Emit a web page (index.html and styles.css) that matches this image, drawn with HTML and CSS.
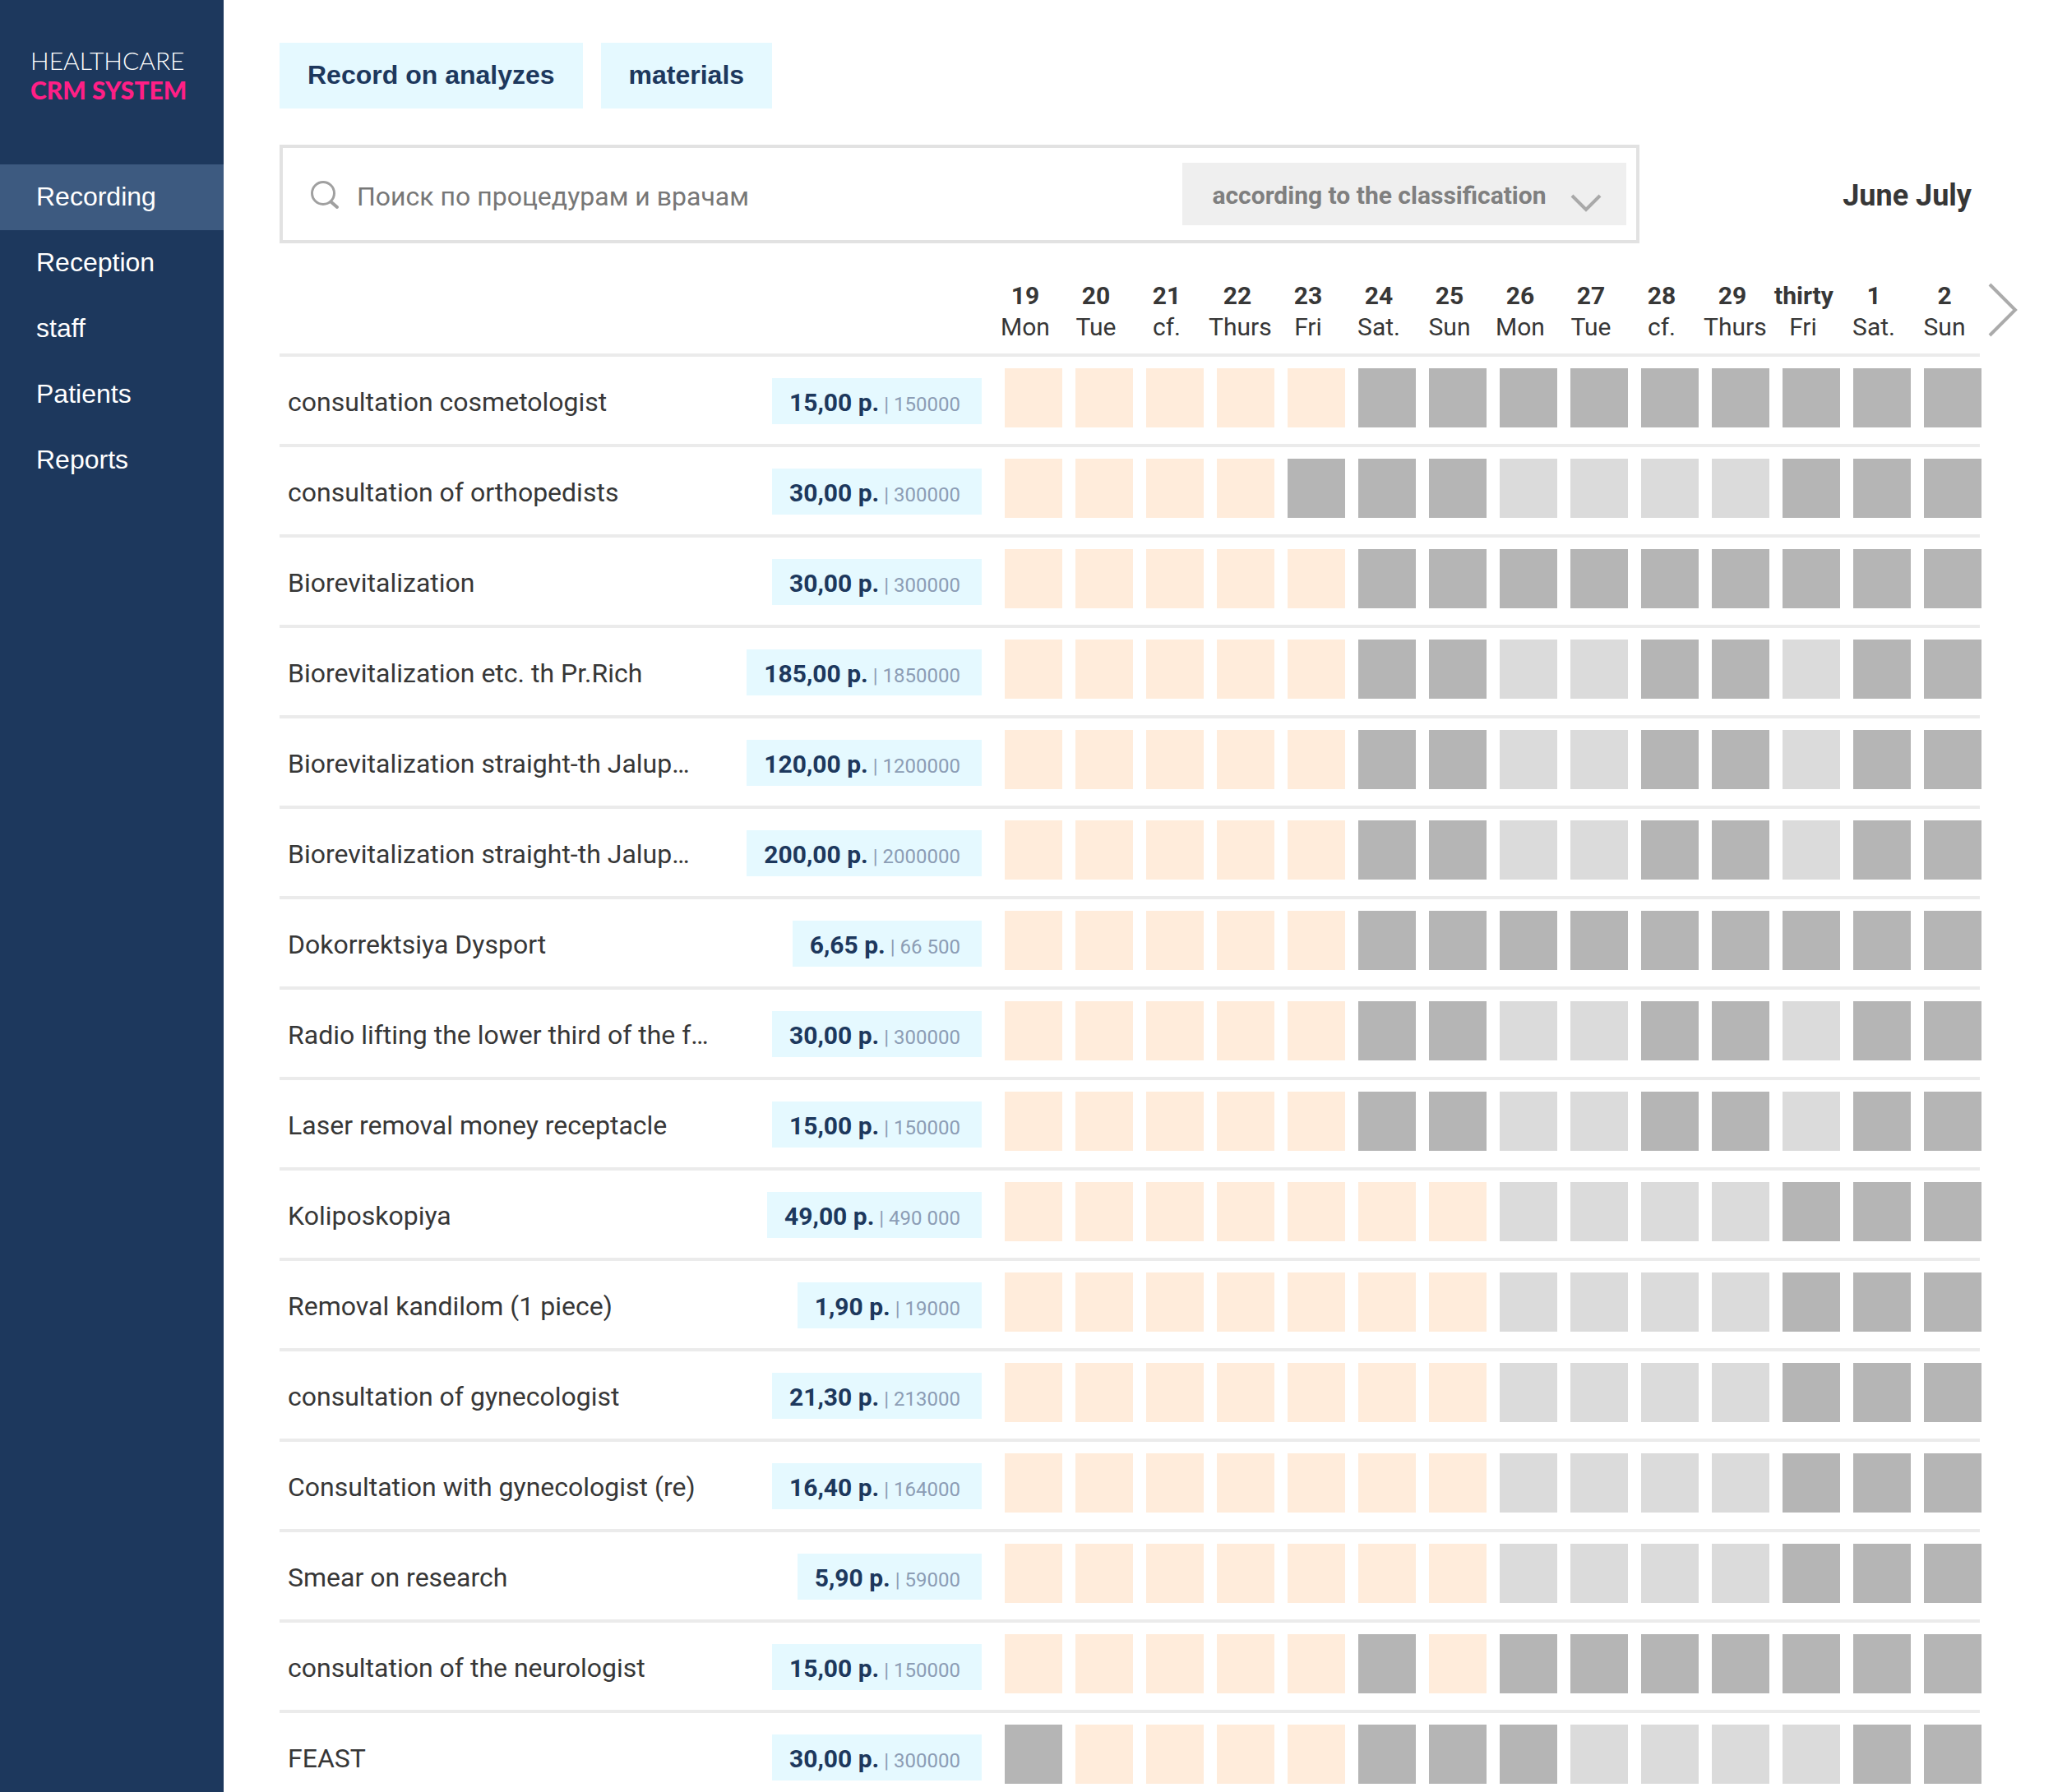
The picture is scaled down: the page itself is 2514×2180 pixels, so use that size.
FILE: index.html
```html
<!DOCTYPE html>
<html lang="en">
<head>
<meta charset="utf-8">
<meta name="viewport" content="width=device-width, initial-scale=1">
<title>Healthcare CRM System</title>
<link rel="stylesheet" href="styles.css">
</head>
<body>
<div class="app">
  <aside class="sidebar">
    <a class="logo" href="#"><span class="logo-top">HEALTHCARE</span><span class="logo-bottom">CRM SYSTEM</span></a>
    <nav class="nav">
      <a class="nav-link active" href="#">Recording</a>
      <a class="nav-link" href="#">Reception</a>
      <a class="nav-link" href="#">staff</a>
      <a class="nav-link" href="#">Patients</a>
      <a class="nav-link" href="#">Reports</a>
    </nav>
  </aside>
  <main class="main">
    <div class="actions">
      <button class="action" type="button">Record on analyzes</button>
      <button class="action" type="button">materials</button>
    </div>
    <div class="toolbar">
      <form class="search">
        <svg class="search-icon" viewBox="0 0 36 36" aria-hidden="true"><circle cx="15" cy="15" r="13.5"/><path class="handle" d="M24.500 25.500l7.500 6.500"/></svg>
        <input class="search-input" type="search" placeholder="Поиск по процедурам и врачам" aria-label="Поиск по процедурам и врачам">
        <div class="sort">
          <select class="sort-select" aria-label="Sort order"><option>according to the classification</option></select>
          <svg class="sort-icon" viewBox="0 0 38 22" aria-hidden="true"><path d="M2 2l17 17L36 2"/></svg>
        </div>
      </form>
      <h1 class="period">June July</h1>
    </div>
    <div class="schedule">
      <table class="table">
        <colgroup><col class="col-name"><col class="col-price"><col class="col-day" span="14"></colgroup>
        <thead>
          <tr>
            <td colspan="2"></td>
            <th scope="col">19<span>Mon</span></th>
            <th scope="col">20<span>Tue</span></th>
            <th scope="col">21<span>cf.</span></th>
            <th scope="col">22<span>Thurs</span></th>
            <th scope="col">23<span>Fri</span></th>
            <th scope="col">24<span>Sat.</span></th>
            <th scope="col">25<span>Sun</span></th>
            <th scope="col">26<span>Mon</span></th>
            <th scope="col">27<span>Tue</span></th>
            <th scope="col">28<span>cf.</span></th>
            <th scope="col">29<span>Thurs</span></th>
            <th scope="col">thirty<span>Fri</span></th>
            <th scope="col">1<span>Sat.</span></th>
            <th scope="col">2<span>Sun</span></th>
          </tr>
        </thead>
        <tbody>
          <tr><th scope="row"><div class="name">consultation cosmetologist</div></th><td class="price"><span class="badge"><b>15,00 p.</b> | 150000</span></td>
            <td class="open"><td class="open"><td class="open"><td class="open"><td class="open"><td class="full"><td class="full"><td class="full"><td class="full"><td class="full"><td class="full"><td class="full"><td class="full"><td class="full"></tr>
          <tr><th scope="row"><div class="name">consultation of orthopedists</div></th><td class="price"><span class="badge"><b>30,00 p.</b> | 300000</span></td>
            <td class="open"><td class="open"><td class="open"><td class="open"><td class="full"><td class="full"><td class="full"><td class="part"><td class="part"><td class="part"><td class="part"><td class="full"><td class="full"><td class="full"></tr>
          <tr><th scope="row"><div class="name">Biorevitalization</div></th><td class="price"><span class="badge"><b>30,00 p.</b> | 300000</span></td>
            <td class="open"><td class="open"><td class="open"><td class="open"><td class="open"><td class="full"><td class="full"><td class="full"><td class="full"><td class="full"><td class="full"><td class="full"><td class="full"><td class="full"></tr>
          <tr><th scope="row"><div class="name">Biorevitalization etc. th Pr.Rich</div></th><td class="price"><span class="badge"><b>185,00 p.</b> | 1850000</span></td>
            <td class="open"><td class="open"><td class="open"><td class="open"><td class="open"><td class="full"><td class="full"><td class="part"><td class="part"><td class="full"><td class="full"><td class="part"><td class="full"><td class="full"></tr>
          <tr><th scope="row"><div class="name">Biorevitalization straight-th Jalup…</div></th><td class="price"><span class="badge"><b>120,00 p.</b> | 1200000</span></td>
            <td class="open"><td class="open"><td class="open"><td class="open"><td class="open"><td class="full"><td class="full"><td class="part"><td class="part"><td class="full"><td class="full"><td class="part"><td class="full"><td class="full"></tr>
          <tr><th scope="row"><div class="name">Biorevitalization straight-th Jalup…</div></th><td class="price"><span class="badge"><b>200,00 p.</b> | 2000000</span></td>
            <td class="open"><td class="open"><td class="open"><td class="open"><td class="open"><td class="full"><td class="full"><td class="part"><td class="part"><td class="full"><td class="full"><td class="part"><td class="full"><td class="full"></tr>
          <tr><th scope="row"><div class="name">Dokorrektsiya Dysport</div></th><td class="price"><span class="badge"><b>6,65 p.</b> | 66 500</span></td>
            <td class="open"><td class="open"><td class="open"><td class="open"><td class="open"><td class="full"><td class="full"><td class="full"><td class="full"><td class="full"><td class="full"><td class="full"><td class="full"><td class="full"></tr>
          <tr><th scope="row"><div class="name">Radio lifting the lower third of the f…</div></th><td class="price"><span class="badge"><b>30,00 p.</b> | 300000</span></td>
            <td class="open"><td class="open"><td class="open"><td class="open"><td class="open"><td class="full"><td class="full"><td class="part"><td class="part"><td class="full"><td class="full"><td class="part"><td class="full"><td class="full"></tr>
          <tr><th scope="row"><div class="name">Laser removal money receptacle</div></th><td class="price"><span class="badge"><b>15,00 p.</b> | 150000</span></td>
            <td class="open"><td class="open"><td class="open"><td class="open"><td class="open"><td class="full"><td class="full"><td class="part"><td class="part"><td class="full"><td class="full"><td class="part"><td class="full"><td class="full"></tr>
          <tr><th scope="row"><div class="name">Koliposkopiya</div></th><td class="price"><span class="badge"><b>49,00 p.</b> | 490 000</span></td>
            <td class="open"><td class="open"><td class="open"><td class="open"><td class="open"><td class="open"><td class="open"><td class="part"><td class="part"><td class="part"><td class="part"><td class="full"><td class="full"><td class="full"></tr>
          <tr><th scope="row"><div class="name">Removal kandilom (1 piece)</div></th><td class="price"><span class="badge"><b>1,90 p.</b> | 19000</span></td>
            <td class="open"><td class="open"><td class="open"><td class="open"><td class="open"><td class="open"><td class="open"><td class="part"><td class="part"><td class="part"><td class="part"><td class="full"><td class="full"><td class="full"></tr>
          <tr><th scope="row"><div class="name">consultation of gynecologist</div></th><td class="price"><span class="badge"><b>21,30 p.</b> | 213000</span></td>
            <td class="open"><td class="open"><td class="open"><td class="open"><td class="open"><td class="open"><td class="open"><td class="part"><td class="part"><td class="part"><td class="part"><td class="full"><td class="full"><td class="full"></tr>
          <tr><th scope="row"><div class="name">Consultation with gynecologist (re)</div></th><td class="price"><span class="badge"><b>16,40 p.</b> | 164000</span></td>
            <td class="open"><td class="open"><td class="open"><td class="open"><td class="open"><td class="open"><td class="open"><td class="part"><td class="part"><td class="part"><td class="part"><td class="full"><td class="full"><td class="full"></tr>
          <tr><th scope="row"><div class="name">Smear on research</div></th><td class="price"><span class="badge"><b>5,90 p.</b> | 59000</span></td>
            <td class="open"><td class="open"><td class="open"><td class="open"><td class="open"><td class="open"><td class="open"><td class="part"><td class="part"><td class="part"><td class="part"><td class="full"><td class="full"><td class="full"></tr>
          <tr><th scope="row"><div class="name">consultation of the neurologist</div></th><td class="price"><span class="badge"><b>15,00 p.</b> | 150000</span></td>
            <td class="open"><td class="open"><td class="open"><td class="open"><td class="open"><td class="full"><td class="open"><td class="full"><td class="full"><td class="full"><td class="full"><td class="full"><td class="full"><td class="full"></tr>
          <tr><th scope="row"><div class="name">FEAST</div></th><td class="price"><span class="badge"><b>30,00 p.</b> | 300000</span></td>
            <td class="full"><td class="open"><td class="open"><td class="open"><td class="open"><td class="full"><td class="full"><td class="full"><td class="part"><td class="part"><td class="part"><td class="part"><td class="full"><td class="full"></tr>
        </tbody>
      </table>
      <button class="next" type="button" aria-label="Next dates"><svg viewBox="0 0 36 66" aria-hidden="true"><path d="M2 2l31 31L2 64"/></svg></button>
    </div>
  </main>
</div>
</body>
</html>
```
FILE: styles.css
```css
* {
  box-sizing: border-box;
}

body {
  margin: 0;
  background: #fff;
  color: #373737;
  font: 32px/40px Roboto, sans-serif;
}

button,
input,
select {
  margin: 0;
  border: 0;
  border-radius: 0;
  background: none;
  color: inherit;
  font: inherit;
}

svg {
  display: block;
  fill: none;
}

.app {
  display: grid;
  grid-template-columns: 272px minmax(0, 1fr);
  min-height: 100vh;
}

/* Sidebar */
.sidebar {
  background: #1d385d;
  color: #fff;
  font-family: "Liberation Sans", Arial, sans-serif;
}

.logo {
  display: flex;
  flex-direction: column;
  height: 200px;
  padding: 55px 37px 0;
  color: #fff;
  font: 300 30px/36px Lato, sans-serif;
  text-decoration: none;
  white-space: nowrap;
}

.logo-bottom {
  color: #ff1f86;
  font-weight: 900;
}

.nav-link {
  display: block;
  padding: 19px 44px 21px;
  color: #fff;
  text-decoration: none;
}

.nav-link.active {
  background: #3d5a80;
}

/* Main area */
.main {
  padding: 52px 60px 0 68px;
}

.actions {
  display: flex;
  gap: 22px;
}

.action {
  height: 80px;
  padding: 0 34px 2px;
  background: #e5f9ff;
  color: #1d385d;
  font: bold 32px/40px "Liberation Sans", Arial, sans-serif;
}

.toolbar {
  display: grid;
  grid-template-columns: 4fr 1fr;
  align-items: center;
  margin: 44px 46px 44px 0;
}

.search {
  display: flex;
  align-items: center;
  height: 120px;
  padding: 0 12px 0 34px;
  border: 4px solid #e2e2e2;
}

.search-icon {
  width: 36px;
  height: 36px;
  margin-top: 4px;
  stroke: #a0a0a0;
  stroke-width: 3;
}

.search-icon .handle {
  stroke-width: 4;
  stroke-linecap: round;
}

.search-input {
  flex: 1;
  min-width: 0;
  padding: 6px 20px 0;
  outline: 0;
}

.search-input::placeholder {
  color: #777;
  opacity: 1;
}

.sort {
  position: relative;
}

.sort-select {
  width: 540px;
  height: 76px;
  padding: 4px 72px 0 36px;
  appearance: none;
  background: #efefef;
  color: #7f7f7f;
  font-size: 30px;
  font-weight: bold;
}

.sort-icon {
  position: absolute;
  right: 30px;
  bottom: 16px;
  width: 38px;
  height: 22px;
  stroke: #a9a9a9;
  stroke-width: 4;
  pointer-events: none;
}

.period {
  margin: 0;
  padding: 4px 10px 0 0;
  font-size: 36px;
  font-weight: bold;
  text-align: right;
}

/* Schedule */
.schedule {
  display: grid;
  grid-template-columns: minmax(0, 1fr) 36px;
  gap: 10px;
  align-items: start;
}

.table {
  width: 100%;
  border-spacing: 0;
  table-layout: fixed;
}

.col-price {
  width: 324px;
}

.col-day {
  width: 86px;
}

.table th,
.table td {
  padding: 0;
  border-bottom: 4px solid #ebebeb;
  vertical-align: top;
  white-space: nowrap;
}

.table thead th {
  padding: 1px 8px 13px;
  font-size: 30px;
  line-height: 38px;
  text-align: center;
}

.table thead span {
  display: block;
  font-weight: normal;
}

.table tbody th {
  padding: 35px 0 0 10px;
  font-weight: normal;
  text-align: left;
}

.name {
  overflow: hidden;
  text-overflow: ellipsis;
}

.table .price {
  padding: 26px 10px 0 0;
  text-align: right;
}

.badge {
  display: inline-block;
  height: 56px;
  padding: 0 26px 0 21px;
  background: #e5f9ff;
  color: #8c9db5;
  font-size: 24px;
  line-height: 60px;
  vertical-align: top;
}

.badge b {
  color: #1d385d;
  font-size: 30px;
}

/* One square per day: peach is open, dark grey is full, light grey is partly booked */
.open,
.part,
.full {
  height: 110px;
}

.table .open,
.table .part,
.table .full {
  padding: 14px 0 0 18px;
}

.open::before,
.part::before,
.full::before {
  display: block;
  width: 70px;
  height: 72px;
  background: #ffecdb;
  content: "";
}

.part::before {
  background: #dbdbdb;
}

.full::before {
  background: #b5b5b5;
}

.table tbody tr:last-child > * {
  height: 96px;
  border-bottom: 0;
}

.next {
  margin-top: 4px;
  padding: 0;
}

.next svg {
  width: 36px;
  height: 66px;
  stroke: #ababab;
  stroke-width: 4;
}
```
